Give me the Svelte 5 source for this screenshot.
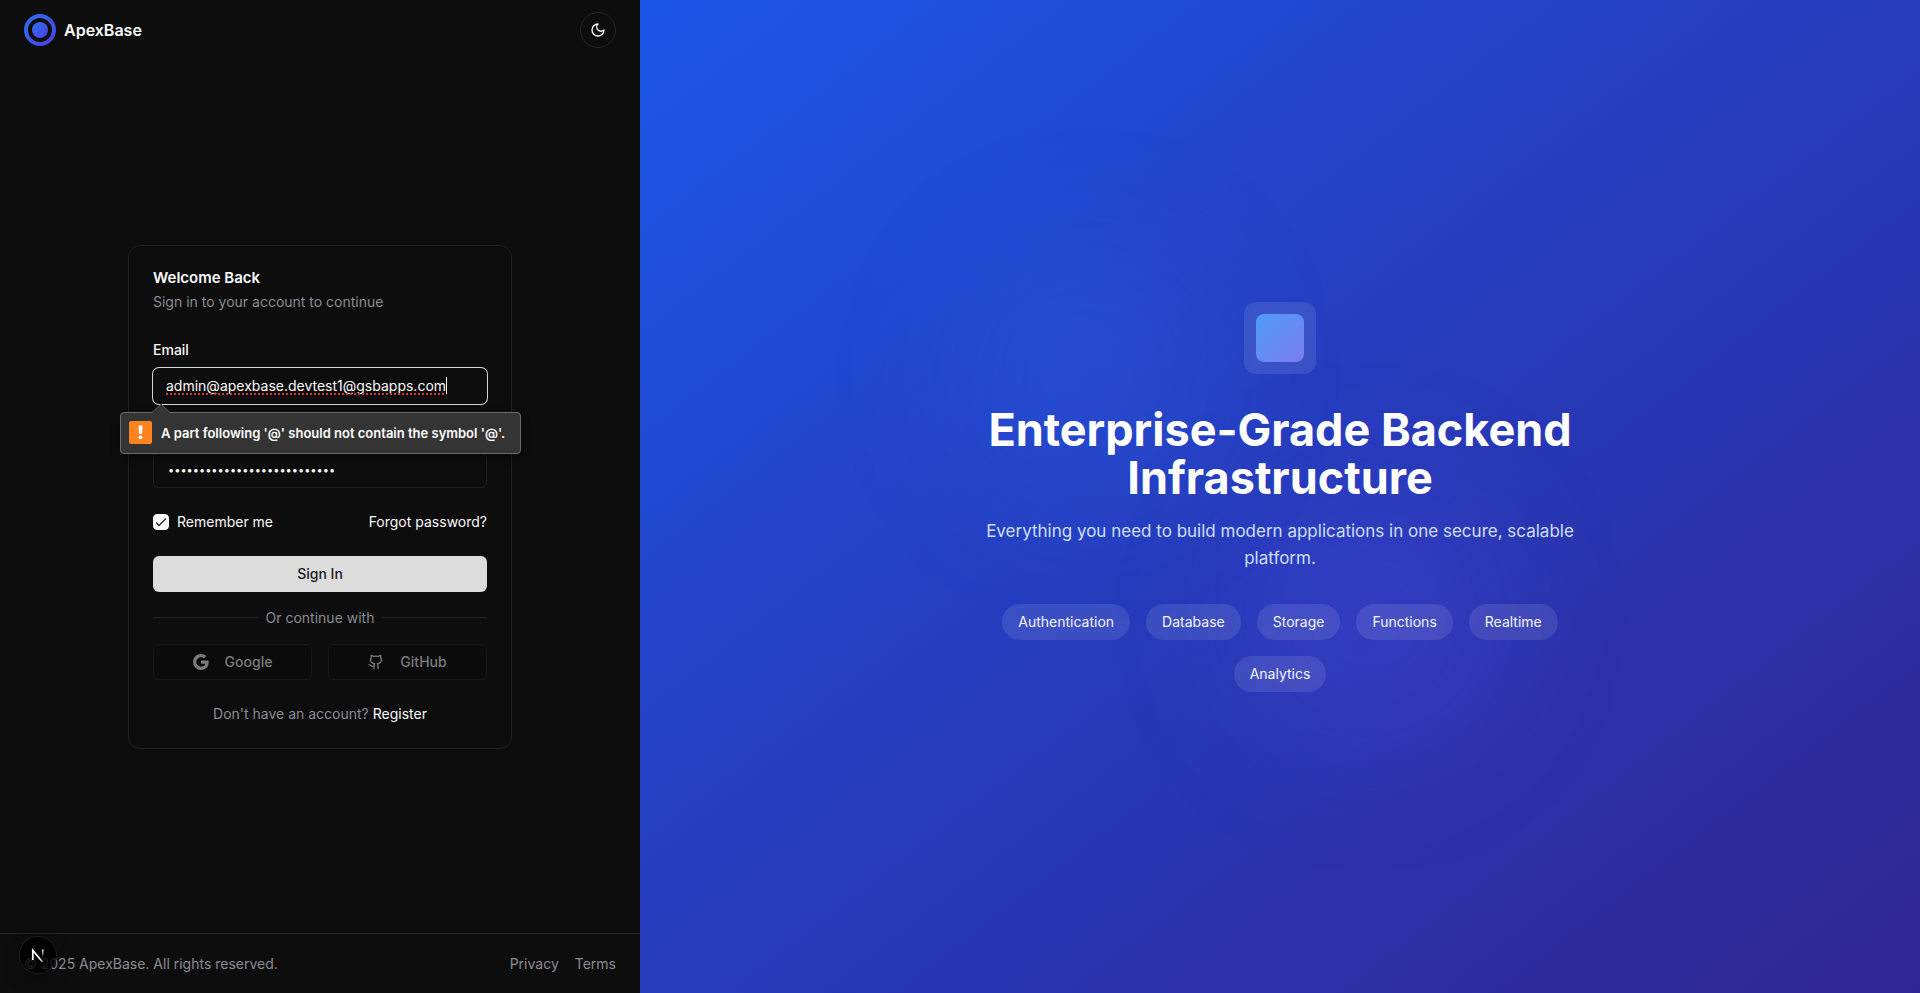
<script>
  let email = $state('admin@apexbase.devtest1@gsbapps.com');
  let password = $state('abcdefghijklmnopqrstuvwxyza');
  let remember = $state(true);
  const features = ['Authentication', 'Database', 'Storage', 'Functions', 'Realtime', 'Analytics'];
</script>

<div class="page">
  <div class="left">
    <header>
      <a class="brand" href="#home">
        <svg width="32" height="32" viewBox="0 0 32 32" aria-hidden="true">
          <defs>
            <linearGradient id="logo" x1="0" y1="0" x2="1" y2="1">
              <stop offset="0" stop-color="#2f6fed" />
              <stop offset="1" stop-color="#4a3fe3" />
            </linearGradient>
          </defs>
          <circle cx="16" cy="16" r="14" fill="none" stroke="url(#logo)" stroke-width="4" />
          <circle cx="16" cy="16" r="8" fill="url(#logo)" />
        </svg>
        <span>ApexBase</span>
      </a>
      <button class="theme" type="button" aria-label="Toggle theme">
        <svg width="16" height="16" viewBox="0 0 24 24" fill="none" stroke="currentColor" stroke-width="2" stroke-linecap="round" stroke-linejoin="round">
          <path d="M12 3a6 6 0 0 0 9 9 9 9 0 1 1-9-9Z" />
        </svg>
      </button>
    </header>

    <main>
      <form class="card" novalidate>
        <div class="head">
          <h1>Welcome Back</h1>
          <p>Sign in to your account to continue</p>
        </div>

        <div class="fields">
          <div class="field">
            <label for="email">Email</label>
            <div class="box active">
              <span class="checked"><input id="email" class="email" type="email" spellcheck="false" bind:value={email} /></span>
              <span class="caret"></span>
            </div>
            <div class="bubble" role="alert">
              <svg class="arrow" width="18" height="9" viewBox="0 0 18 9" aria-hidden="true">
                <path d="M0 9 9 0l9 9Z" fill="#343434" />
                <path d="M0 8.500 9 0l9 8.500" fill="none" stroke="#5c5c5c" />
              </svg>
              <svg width="23" height="23" viewBox="0 0 23 23" aria-hidden="true">
                <rect width="23" height="23" rx="2" fill="#ff8420" />
                <path d="M9.500 4.500h4l-.5 8.500h-3Z" fill="#fff" />
                <circle cx="11.500" cy="16.300" r="1.900" fill="#fff" />
              </svg>
              <span>A part following '@' should not contain the symbol '@'.</span>
            </div>
          </div>
          <div class="field covered">
            <input class="box" type="password" aria-label="Password" bind:value={password} />
          </div>
        </div>

        <div class="options">
          <label class="remember"><input type="checkbox" bind:checked={remember} />Remember me</label>
          <a href="#forgot">Forgot password?</a>
        </div>

        <button class="submit" type="button">Sign In</button>

        <div class="divider"><span>Or continue with</span></div>

        <div class="social">
          <button type="button" disabled>
            <svg width="16" height="16" viewBox="0 0 16 16" fill="currentColor" aria-hidden="true">
              <path d="M15.545 6.558a9.420 9.420 0 0 1 .139 1.626c0 2.434-.870 4.492-2.384 5.885h.002C11.978 15.292 10.158 16 8 16A8 8 0 1 1 8 0a7.689 7.689 0 0 1 5.352 2.082l-2.284 2.284A4.347 4.347 0 0 0 8 3.166c-2.087 0-3.860 1.408-4.492 3.304a4.792 4.792 0 0 0 0 3.063h.003c.635 1.893 2.405 3.301 4.492 3.301 1.078 0 2.004-.276 2.722-.764h-.003a3.702 3.702 0 0 0 1.599-2.431H8v-3.080h7.545z" />
            </svg>
            Google
          </button>
          <button type="button" disabled>
            <svg width="16" height="16" viewBox="0 0 24 24" fill="none" stroke="currentColor" stroke-width="2" stroke-linecap="round" stroke-linejoin="round" aria-hidden="true">
              <path d="M15 22v-4a4.800 4.800 0 0 0-1-3.500c3 0 6-2 6-5.500.080-1.250-.270-2.480-1-3.500.280-1.150.280-2.350 0-3.500 0 0-1 0-3 1.500-2.640-.5-5.360-.5-8 0C6 2 5 2 5 2c-.300 1.150-.300 2.350 0 3.500A5.403 5.403 0 0 0 4 9c0 3.500 3 5.500 6 5.500-.390.490-.680 1.050-.850 1.650-.170.600-.220 1.230-.150 1.850v4" />
              <path d="M9 18c-4.510 2-5-2-7-2" />
            </svg>
            GitHub
          </button>
        </div>

        <p class="register">Don't have an account? <a href="#register">Register</a></p>
      </form>
    </main>

    <footer>
      <span>© 2025 ApexBase. All rights reserved.</span>
      <nav><a href="#privacy">Privacy</a><a href="#terms">Terms</a></nav>
      <button class="dev" type="button" aria-label="Open developer tools">
        <svg width="36" height="36" viewBox="0 0 36 36" fill="none" aria-hidden="true">
          <defs>
            <linearGradient id="fade" x1="0" y1="0" x2="0" y2="1">
              <stop offset="0" stop-color="#fff" />
              <stop offset="1" stop-color="#fff" stop-opacity="0" />
            </linearGradient>
            <linearGradient id="diag" x1="0.700" y1="0.700" x2="1" y2="1">
              <stop offset="0" stop-color="#fff" />
              <stop offset="1" stop-color="#fff" stop-opacity="0.500" />
            </linearGradient>
          </defs>
          <path d="M12.800 23V13.300L22.500 25" stroke="url(#diag)" stroke-width="1.700" />
          <rect x="22" y="12.500" width="1.500" height="8" fill="url(#fade)" />
        </svg>
      </button>
    </footer>
  </div>

  <section class="hero">
    <div class="glow one"></div>
    <div class="glow two"></div>
    <div class="content">
      <div class="emblem"><div></div></div>
      <h2>Enterprise-Grade Backend Infrastructure</h2>
      <p>Everything you need to build modern applications in one secure, scalable platform.</p>
      <ul>
        {#each features as feature}
          <li>{feature}</li>
        {/each}
      </ul>
    </div>
  </section>
</div>

<style>
  :global(body) {
    margin: 0;
    background: #0d0d0d;
  }
  .page, .page * {
    box-sizing: border-box;
  }
  .page {
    display: grid;
    grid-template-columns: 1fr 2fr;
    min-height: 100vh;
    color: #fafafa;
    font: 400 14px/20px Inter, sans-serif;
  }
  h1, h2, p, ul {
    margin: 0;
    padding: 0;
  }
  a {
    color: inherit;
    text-decoration: none;
  }
  button, input {
    font: inherit;
    color: inherit;
  }
  .left {
    display: flex;
    flex-direction: column;
  }
  header {
    display: flex;
    align-items: center;
    justify-content: space-between;
    padding: 12px 24px;
  }
  .brand {
    display: flex;
    align-items: center;
    gap: 8px;
    font-size: 16px;
    font-weight: 600;
  }
  .theme {
    display: grid;
    place-items: center;
    width: 36px;
    height: 36px;
    padding: 0;
    border: 1px solid #262626;
    border-radius: 50%;
    background: transparent;
  }
  main {
    flex: 1;
    display: flex;
    align-items: center;
    justify-content: center;
    padding: 24px;
  }
  .card {
    width: 100%;
    max-width: 384px;
    padding: 24px;
    border: 1px solid #212123;
    border-radius: 12px;
  }
  .head {
    display: grid;
    gap: 6px;
    margin-bottom: 28px;
  }
  h1 {
    font-size: 15px;
    line-height: 16px;
    font-weight: 600;
  }
  .head p, .register, footer {
    color: #8b8b94;
  }
  .fields {
    display: grid;
    gap: 20px;
  }
  .field {
    position: relative;
    display: grid;
    gap: 8px;
  }
  .field label {
    font-weight: 500;
  }
  .covered {
    padding-top: 28px;
  }
  .box {
    display: flex;
    align-items: center;
    width: 100%;
    height: 36px;
    padding: 0 12px;
    border: 1px solid #212123;
    border-radius: 6px;
    background: transparent;
    outline: none;
  }
  .covered .box {
    padding-left: 14px;
    font-size: 11px;
  }
  .active {
    border-color: transparent;
    box-shadow: 0 0 0 1px #d4d4d8;
  }
  .checked {
    position: relative;
    display: flex;
    max-width: 100%;
  }
  .checked::after {
    content: '';
    position: absolute;
    left: 0;
    right: 0;
    bottom: 1px;
    height: 2px;
    background: repeating-linear-gradient(90deg, #d8343a 0 2px, transparent 2px 4px);
  }
  .email {
    field-sizing: content;
    padding: 0;
    border: 0;
    outline: none;
    background: transparent;
    min-width: 0;
  }
  .caret {
    width: 1px;
    height: 17px;
    background: #fff;
  }
  .bubble {
    position: absolute;
    z-index: 2;
    top: 72px;
    left: -33px;
    display: flex;
    align-items: center;
    gap: 9px;
    min-width: 401px;
    height: 42px;
    padding: 0 9px 0 8px;
    border: 1px solid #6b6b6b;
    border-radius: 4px;
    background: #343434;
    box-shadow: 0 4px 8px rgba(0, 0, 0, 0.4);
    font-size: 13px;
    font-weight: 600;
    white-space: nowrap;
    color: #fff;
  }
  .bubble .arrow {
    position: absolute;
    left: 31px;
    top: -9px;
  }
  .options {
    display: flex;
    justify-content: space-between;
    margin: 24px 0;
  }
  .remember {
    display: flex;
    align-items: center;
    gap: 8px;
  }
  .remember input {
    appearance: none;
    width: 16px;
    height: 16px;
    margin: 0;
    border: 1px solid #fafafa;
    border-radius: 4px;
  }
  .remember input:checked {
    background: #fafafa url("data:image/svg+xml,%3Csvg xmlns='http://www.w3.org/2000/svg' viewBox='0 0 14 14' fill='none' stroke='%23222' stroke-width='1.200' stroke-linecap='round' stroke-linejoin='round'%3E%3Cpath d='M2.500 8 5 10.500 11.500 4'/%3E%3C/svg%3E") center / 14px 14px no-repeat;
  }
  .submit {
    display: block;
    width: 100%;
    height: 36px;
    border: 0;
    border-radius: 6px;
    background: #dcdcdc;
    color: #18181b;
    font-weight: 500;
  }
  .divider {
    display: flex;
    align-items: center;
    gap: 8px;
    margin: 16px 0;
    color: #8b8b94;
  }
  .divider::before, .divider::after {
    content: '';
    flex: 1;
    height: 1px;
    background: #262628;
  }
  .social {
    display: grid;
    grid-template-columns: 1fr 1fr;
    gap: 16px;
  }
  .social button {
    display: flex;
    align-items: center;
    justify-content: center;
    gap: 16px;
    height: 36px;
    border: 1px solid #18181a;
    border-radius: 6px;
    background: #0b0b0b;
    color: #7c7c7c;
    font-weight: 500;
  }
  .register {
    margin-top: 24px;
    text-align: center;
  }
  .register a {
    color: #fafafa;
  }
  footer {
    position: relative;
    display: flex;
    justify-content: space-between;
    padding: 20px 24px 19px;
    border-top: 1px solid #262628;
  }
  nav {
    display: flex;
    gap: 16px;
  }
  .dev {
    position: absolute;
    left: 20px;
    bottom: 20px;
    width: 36px;
    height: 36px;
    padding: 0;
    border: 0;
    border-radius: 50%;
    background: rgba(0, 0, 0, 0.8);
    box-shadow: 0 0 0 1px #1e1e1e, 0 8px 20px rgba(0, 0, 0, 0.2);
  }
  .dev svg {
    display: block;
  }
  .hero {
    position: relative;
    display: flex;
    align-items: center;
    justify-content: center;
    overflow: hidden;
    background: linear-gradient(to bottom right, #1c57e8, #263bbb 50%, #312592);
  }
  .glow {
    position: absolute;
    width: 256px;
    height: 256px;
    border-radius: 50%;
    filter: blur(64px);
  }
  .one {
    top: 25%;
    left: 25%;
    background: rgba(50, 120, 255, 0.16);
  }
  .two {
    bottom: 25%;
    right: 33%;
    background: rgba(90, 80, 240, 0.22);
  }
  .content {
    position: relative;
    display: flex;
    flex-direction: column;
    align-items: center;
    max-width: 600px;
    text-align: center;
  }
  .emblem {
    padding: 12px;
    margin-bottom: 32px;
    border-radius: 12px;
    background: rgba(255, 255, 255, 0.1);
  }
  .emblem div {
    width: 48px;
    height: 48px;
    border-radius: 8px;
    background: linear-gradient(to bottom right, #4f9cf9, #7b7cf0);
  }
  h2 {
    margin-bottom: 16px;
    font-size: 45px;
    line-height: 48px;
    font-weight: 700;
    color: #fff;
  }
  .hero p {
    margin-bottom: 32px;
    font-size: 17px;
    line-height: 27px;
    color: #cfdffb;
  }
  ul {
    display: flex;
    flex-wrap: wrap;
    justify-content: center;
    gap: 16px;
    list-style: none;
  }
  li {
    padding: 8px 16px;
    border-radius: 18px;
    background: rgba(255, 255, 255, 0.1);
    color: #f3f5ff;
  }
</style>
